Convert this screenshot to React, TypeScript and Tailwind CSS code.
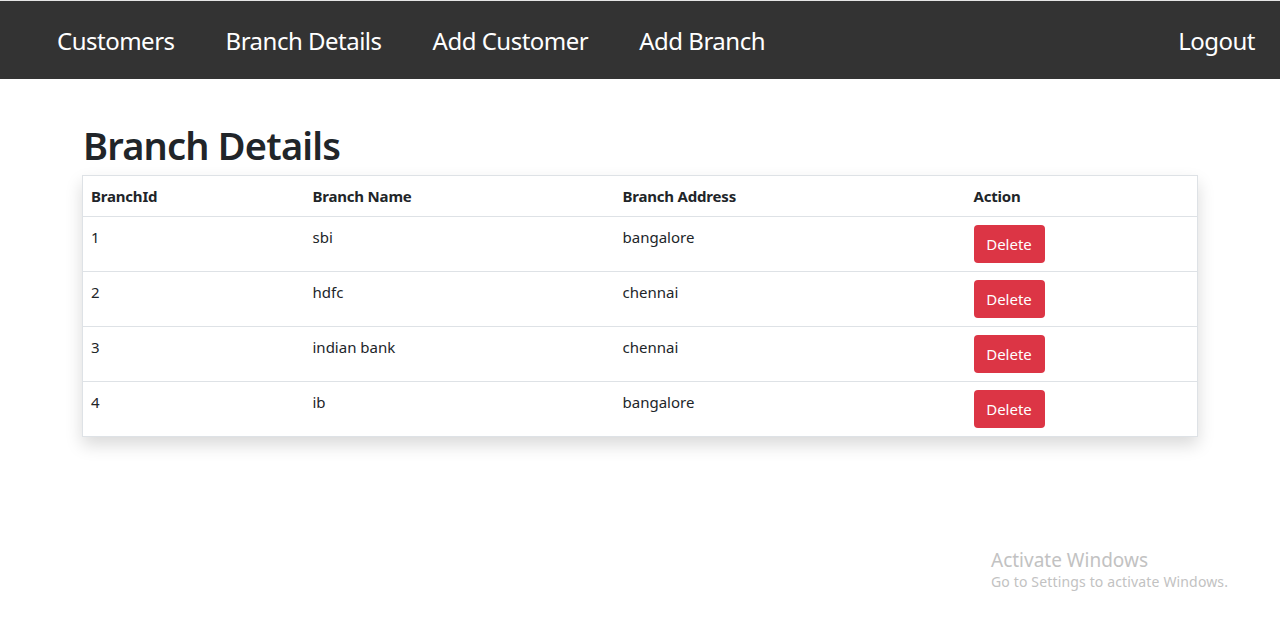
import React from "react";

const rows = [
  { id: 1, name: "sbi", addr: "bangalore" },
  { id: 2, name: "hdfc", addr: "chennai" },
  { id: 3, name: "indian bank", addr: "chennai" },
  { id: 4, name: "ib", addr: "bangalore" },
];

export default function App() {
  return (
    <div
      className="min-h-[624px] bg-white relative"
      style={{ fontFamily: '"Noto Sans", "Open Sans", sans-serif' }}
    >
      <div className="h-px bg-[#e5e5e5]" />
      <nav className="h-[78px] bg-[#333333] flex items-center justify-between pl-[57px] pr-[25px] pt-[2px]">
        <div className="flex items-center gap-[51px]">
          {["Customers", "Branch Details", "Add Customer", "Add Branch"].map((t) => (
            <span key={t} className="text-white text-[24px] tracking-[-0.5px]">
              {t}
            </span>
          ))}
        </div>
        <span className="text-white text-[24px] tracking-[-0.5px]">Logout</span>
      </nav>
      <div className="px-[82px] pt-[38px]">
        <h1 className="text-[38px] font-semibold text-[#212529] leading-[56px] tracking-[-0.8px] pl-px mb-[2px]">
          Branch Details
        </h1>
        <table className="w-[1115px] table-fixed border border-[#dee2e6] shadow-[0_8px_16px_rgba(0,0,0,0.15)] text-[15px] text-[#212529] border-collapse">
          <colgroup>
            <col className="w-[222px]" />
            <col className="w-[310px]" />
            <col className="w-[351px]" />
            <col className="w-[232px]" />
          </colgroup>
          <thead>
            <tr className="h-[41px] border-b border-[#dee2e6]">
              {["BranchId", "Branch Name", "Branch Address", "Action"].map((h) => (
                <th key={h} className="text-left font-bold px-[8px] align-middle tracking-[-0.2px]">
                  {h}
                </th>
              ))}
            </tr>
          </thead>
          <tbody>
            {rows.map((r, i) => (
              <tr key={r.id} className={`h-[55px] ${i < rows.length - 1 ? "border-b border-[#dee2e6]" : ""}`}>
                <td className="px-[8px] pt-[9px] align-top">{r.id}</td>
                <td className="px-[8px] pt-[9px] align-top">{r.name}</td>
                <td className="px-[8px] pt-[9px] align-top">{r.addr}</td>
                <td className="px-[8px] pt-[8px] pb-[8px] align-top">
                  <button className="bg-[#dc3545] text-white text-[15px] rounded-[4px] h-[38px] w-[71px]">
                    Delete
                  </button>
                </td>
              </tr>
            ))}
          </tbody>
        </table>
      </div>
      <div className="absolute left-[991px] top-[548px] text-[#c2c2c2]">
        <div className="text-[19px] leading-[24px]">Activate Windows</div>
        <div className="text-[14px] leading-[20px] tracking-[0.15px]">Go to Settings to activate Windows.</div>
      </div>
    </div>
  );
}
